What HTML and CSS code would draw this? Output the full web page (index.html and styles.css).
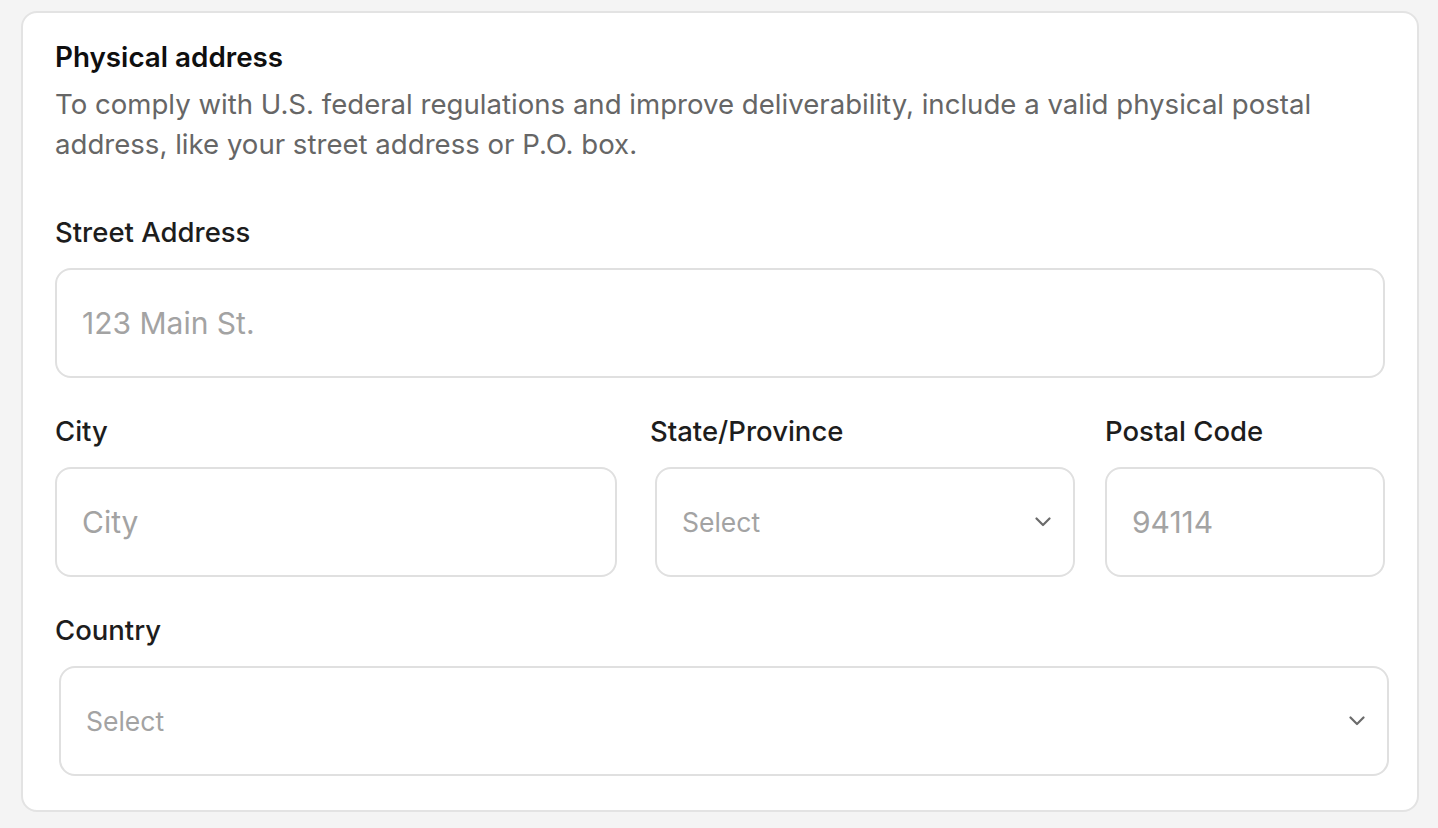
FILE: index.html
```html
<!DOCTYPE html>
<html lang="en">
<head>
<meta charset="utf-8">
<title>Physical address</title>
<link rel="stylesheet" href="styles.css">
</head>
<body>
<section class="card">
  <h2 class="title">Physical address</h2>
  <p class="desc">To comply with U.S. federal regulations and improve deliverability, include a valid physical postal address, like your street address or P.O. box.</p>

  <div class="field">
    <label class="label" for="street">Street Address</label>
    <input class="input" id="street" type="text" placeholder="123 Main St.">
  </div>

  <div class="row">
    <div class="field">
      <label class="label" for="city">City</label>
      <input class="input input-city" id="city" type="text" placeholder="City">
    </div>
    <div class="field">
      <label class="label" for="state">State/Province</label>
      <div class="select-wrap select-state">
        <select class="select" id="state"><option>Select</option></select>
        <svg class="chevron" width="16" height="10" viewBox="0 0 16 10" aria-hidden="true"><path d="M1.5 1.5 L8 8 L14.5 1.5" fill="none" stroke="#6b6b6b" stroke-width="2.2" stroke-linecap="round" stroke-linejoin="round"/></svg>
      </div>
    </div>
    <div class="field">
      <label class="label" for="zip">Postal Code</label>
      <input class="input" id="zip" type="text" placeholder="94114">
    </div>
  </div>

  <div class="field">
    <label class="label" for="country">Country</label>
    <div class="select-wrap select-country">
      <select class="select" id="country"><option>Select</option></select>
      <svg class="chevron" width="16" height="10" viewBox="0 0 16 10" aria-hidden="true"><path d="M1.5 1.5 L8 8 L14.5 1.5" fill="none" stroke="#6b6b6b" stroke-width="2.2" stroke-linecap="round" stroke-linejoin="round"/></svg>
    </div>
  </div>
</section>
</body>
</html>
```
FILE: styles.css
```css
* { box-sizing: border-box; }

html, body {
  margin: 0;
  background: #f4f4f4;
}

body {
  padding: 11px 19px 16px 21px;
  font-family: Inter, "Noto Sans", sans-serif;
  color: #1d1d1d;
}

.card {
  background: #ffffff;
  border: 2px solid #e3e3e3;
  border-radius: 16px;
  padding: 24px 32px 34px 32px;
  display: flex;
  flex-direction: column;
}

.title {
  margin: 0;
  font-size: 27.8px;
  line-height: 40px;
  font-weight: 600;
  color: #0f0f0f;
  letter-spacing: 0;
}

.desc {
  margin: 7px 0 0 0;
  font-size: 27.6px;
  line-height: 40px;
  font-weight: 400;
  color: #666666;
}

.field {
  display: flex;
  flex-direction: column;
  margin-top: 33px;
}

.desc + .field {
  margin-top: 48px;
}

.row .field {
  margin-top: 0;
}

.row {
  display: grid;
  grid-template-columns: 565px 425px 280px;
  column-gap: 30px;
  margin-top: 33px;
}

.label {
  font-size: 27.5px;
  line-height: 40px;
  font-weight: 500;
  color: #1d1d1d;
  margin-bottom: 16px;
}

.input,
.select {
  height: 110px;
  width: 100%;
  border: 2px solid #e0e0e0;
  border-radius: 16px;
  background: #ffffff;
  padding: 0 25px;
  font-family: Inter, "Noto Sans", sans-serif;
  color: #1d1d1d;
  outline: none;
  margin: 0;
}

.input {
  font-size: 30px;
}

.input::placeholder {
  color: #a3a3a3;
  opacity: 1;
}

.input-city {
  width: calc(100% - 3px);
}

.select {
  appearance: none;
  -webkit-appearance: none;
  font-size: 26.5px;
  color: #a3a3a3;
  padding-right: 60px;
}

.select-wrap {
  position: relative;
}

.select-state {
  margin-left: 5px;
}

.select-country {
  margin-left: 4px;
  margin-right: -4px;
}

.chevron {
  position: absolute;
  right: 24px;
  top: 50%;
  margin-top: -5px;
  pointer-events: none;
}
```
